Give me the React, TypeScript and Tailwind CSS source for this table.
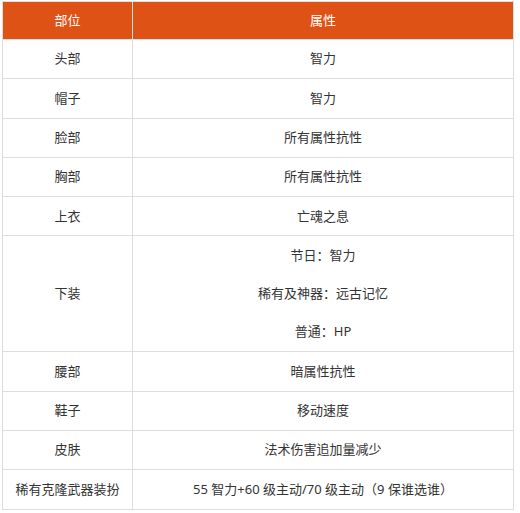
const rows: { part: string; attr: string[] }[] = [
  { part: "头部", attr: ["智力"] },
  { part: "帽子", attr: ["智力"] },
  { part: "脸部", attr: ["所有属性抗性"] },
  { part: "胸部", attr: ["所有属性抗性"] },
  { part: "上衣", attr: ["亡魂之息"] },
  { part: "下装", attr: ["节日：智力", "稀有及神器：远古记忆", "普通：HP"] },
  { part: "腰部", attr: ["暗属性抗性"] },
  { part: "鞋子", attr: ["移动速度"] },
  { part: "皮肤", attr: ["法术伤害追加量减少"] },
  { part: "稀有克隆武器装扮", attr: ["55 智力+60 级主动/70 级主动（9 保谁选谁）"] },
];

export default function App() {
  return (
    <div
      className="bg-white pl-[2px] pt-[1px] text-[13px] text-[#333]"
      style={{ fontFamily: '"Noto Sans", "Noto Sans CJK SC", sans-serif' }}
    >
      <table className="w-[512px] border-collapse table-fixed">
        <colgroup>
          <col className="w-[130px]" />
          <col />
        </colgroup>
        <thead>
          <tr className="h-[38px] bg-[#df5216] text-white">
            <th className="border border-[#ddd] font-normal text-center">部位</th>
            <th className="border border-[#ddd] font-normal text-center">属性</th>
          </tr>
        </thead>
        <tbody>
          {rows.map((r) => (
            <tr key={r.part} className="h-[38.4px]">
              <td className="border border-[#ddd] text-center">{r.part}</td>
              <td className="border border-[#ddd] text-center">
                {r.attr.map((a) => (
                  <div key={a} className="h-[38.3px] flex items-center justify-center">
                    {a}
                  </div>
                ))}
              </td>
            </tr>
          ))}
        </tbody>
      </table>
    </div>
  );
}
